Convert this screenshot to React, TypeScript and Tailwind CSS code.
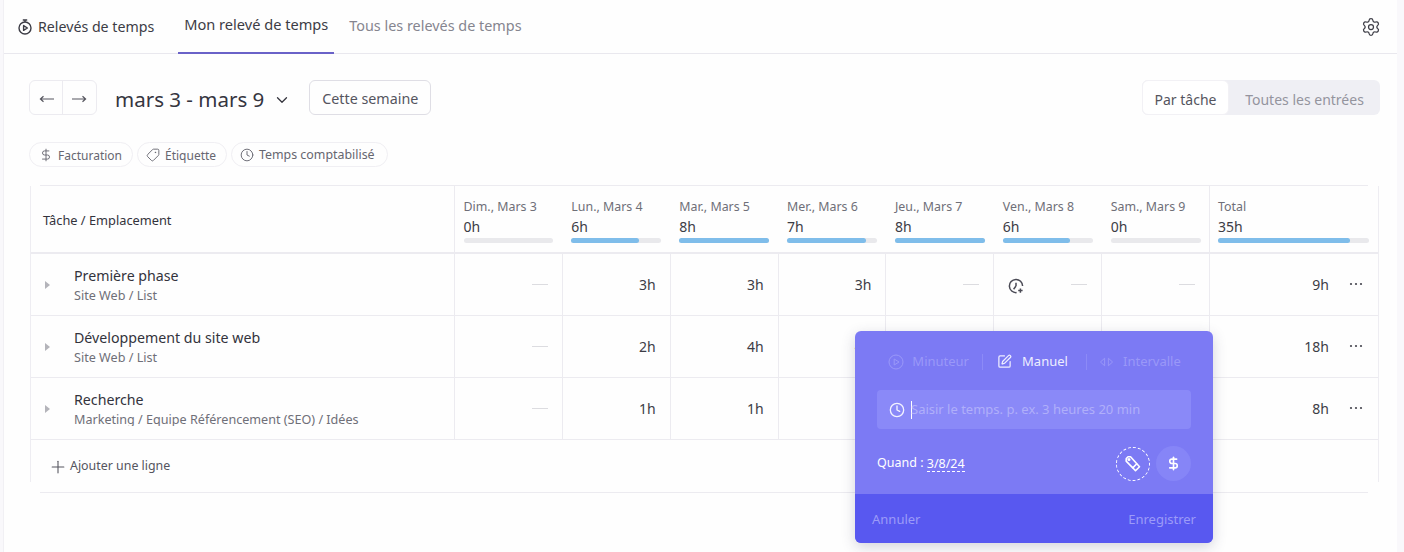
import { ChevronDown, Clock, DollarSign, Plus, Settings, SquarePen, Tag } from "lucide-react";

const days = [
  { label: "Dim., Mars 3", total: "0h", fill: "w-0" },
  { label: "Lun., Mars 4", total: "6h", fill: "w-[75%]" },
  { label: "Mar., Mars 5", total: "8h", fill: "w-full" },
  { label: "Mer., Mars 6", total: "7h", fill: "w-[88%]" },
  { label: "Jeu., Mars 7", total: "8h", fill: "w-full" },
  { label: "Ven., Mars 8", total: "6h", fill: "w-[75%]" },
  { label: "Sam., Mars 9", total: "0h", fill: "w-0" },
];

// cells hidden behind the popup stay empty
const rows = [
  { title: "Première phase", path: "Site Web / List", hours: ["", "3h", "3h", "3h", "", "", ""], total: "9h", clipped: false },
  { title: "Développement du site web", path: "Site Web / List", hours: ["", "2h", "4h", "4h", "", "", ""], total: "18h", clipped: false },
  { title: "Recherche", path: "Marketing / Equipe Référencement (SEO) / Idées", hours: ["", "1h", "1h", "", "", "", ""], total: "8h", clipped: true },
];

function TimerIcon({ className }: { className?: string }) {
  return (
    <svg viewBox="0 0 16 16" fill="none" stroke="currentColor" strokeWidth="1.4" className={className}>
      <path d="M5.8 1h4.4M8 1v2" />
      <circle cx="8" cy="9" r="6" />
      <path d="M6.6 6.6v4.8L10.4 9z" strokeLinejoin="round" />
    </svg>
  );
}

function TimerIconPlain() {
  return (
    <svg viewBox="0 0 16 16" fill="none" stroke="currentColor" strokeWidth="1" className="h-4 w-4">
      <circle cx="8" cy="8" r="7" />
      <path d="M6.2 5v6L11 8z" strokeLinejoin="round" />
    </svg>
  );
}

function ClockPlusIcon() {
  return (
    <svg viewBox="0 0 16 16" fill="none" stroke="currentColor" strokeWidth="1.5" className="h-4 w-4 text-[#4a4a55]">
      <path d="M8.6 14.6A6.6 6.6 0 1 1 14.6 8" />
      <path d="M8 8 5.6 11.2M8 4.8V8" />
      <path d="M12.4 10.4v4.4M10.2 12.6h4.4" />
    </svg>
  );
}

function Arrow({ flip }: { flip?: boolean }) {
  return (
    <svg viewBox="0 0 15 10" fill="none" stroke="currentColor" strokeWidth="1.2" className={flip ? "mt-[3px] h-[10px] w-[15px] rotate-180" : "mt-[3px] h-[10px] w-[15px]"}>
      <path d="M1 5h14M4.5 2.2 1.4 5l3.1 2.8" />
    </svg>
  );
}

function TagsIcon() {
  return (
    <svg viewBox="0 0 16 16" fill="none" stroke="currentColor" strokeWidth="1.4" strokeLinejoin="round" className="h-[18px] w-[18px]">
      <path d="M2 3.2 3.6 1.6h2.2l5.6 6.2-3.6 3.6L1.9 5.4z" />
      <path d="M11.4 7.8l2.4 2.6-3.6 3.6-2.4-2.6" />
      <circle cx="4.4" cy="4" r="0.7" />
    </svg>
  );
}

function Dots() {
  return (
    <svg viewBox="0 0 14 4" fill="currentColor" className="ml-[20px] h-1 w-[14px] -translate-y-px text-[#45454e]">
      <circle cx="2" cy="2" r="1.1" />
      <circle cx="7" cy="2" r="1.1" />
      <circle cx="12" cy="2" r="1.1" />
    </svg>
  );
}

function Filter({ icon, label, className }: { icon: React.ReactNode; label: string; className: string }) {
  return (
    <div className={`flex h-[25px] items-center gap-[5px] rounded-full border border-[#f0eff3] text-[#666670] ${className}`}>
      {icon}
      <span className="pt-[2px]">{label}</span>
    </div>
  );
}

export default function App() {
  return (
    <div className="relative h-[552px] w-[1404px] overflow-hidden bg-[#f9f8fb] font-['Noto_Sans',sans-serif] text-[#2f2f38]">
      <div className="ml-[3px] mr-[7px] h-full border-l border-[#f1f0f4] bg-[#fefefe]">
        <header className="flex h-[54px] items-stretch border-b border-[#e9e8ee] pl-[13px]">
          <div className="mt-px flex items-center gap-[5px] text-[14.2px] text-[#3c3c45]">
            <TimerIcon className="h-4 w-4" />
            <span>Relevés de temps</span>
          </div>
          <div className="ml-[24px] flex h-[54px] w-[156px] items-center justify-center border-b-2 border-[#6a62c8] pb-[2px] text-[14.6px] text-[#3c3c45]">
            Mon relevé de temps
          </div>
          <div className="ml-[15px] flex items-center pb-[2px] text-[14.4px] text-[#85858f]">Tous les relevés de temps</div>
          <div className="ml-auto flex items-center pr-4">
            <Settings className="h-5 w-5 text-[#3f3f48]" strokeWidth={1.5} />
          </div>
        </header>

        <div className="mt-[26px] flex h-[35px] items-center pl-[25px]">
          <div className="flex h-[35px] w-[68px] rounded-md border border-[#ecebf0] text-[#55555e]">
            <div className="flex w-[33px] items-center justify-center border-r border-[#ecebf0]">
              <Arrow />
            </div>
            <div className="flex flex-1 items-center justify-center">
              <Arrow flip />
            </div>
          </div>
          <div className="ml-[18px] flex items-center gap-[9px] pt-1 text-[20.5px] text-[#35353e]">
            mars 3 - mars 9
            <ChevronDown className="h-[18px] w-[18px]" strokeWidth={1.7} />
          </div>
          <div className="ml-[18px] flex h-[35px] w-[122px] items-center justify-center rounded-md border border-[#dfdee5] pt-[3px] text-[14.3px] text-[#55555e]">
            Cette semaine
          </div>
          <div className="ml-auto mr-[17px] flex h-[35px] w-[238px] rounded-md bg-[#efeff4] text-sm">
            <div className="flex w-[87px] items-center justify-center rounded-md border border-[#f2f1f5] bg-white pt-1 text-[#55555e]">
              Par tâche
            </div>
            <div className="flex flex-1 items-center justify-center pt-1 text-[#94949e]">Toutes les entrées</div>
          </div>
        </div>

        <div className="mt-[27px] flex gap-[4px] pl-[25px]">
          <Filter icon={<DollarSign className="h-[14px] w-[14px]" strokeWidth={1.6} />} label="Facturation" className="w-[104px] pl-[9px] text-xs" />
          <Filter icon={<Tag className="h-[14px] w-[14px] -scale-x-100" strokeWidth={1.6} />} label="Étiquette" className="w-[90px] pl-[8px] text-xs" />
          <Filter icon={<Clock className="h-[14px] w-[14px]" strokeWidth={1.6} />} label="Temps comptabilisé" className="w-[157px] pl-[8px] text-[12.4px]" />
        </div>

        <div className="ml-[36px] mr-[29px] mt-[18px] h-px bg-[#ecebf0]" />

        <div className="ml-[26px] mr-[18px] border-x border-[#eeedf2]">
          <div className="grid h-[68px] grid-cols-[424px_repeat(7,107.86px)_1fr] border-b-2 border-[#ecebf0]">
            <div className="flex items-center border-r border-[#ecebf0] pl-[12px] pt-1 text-[12.8px] text-[#33333c]">Tâche / Emplacement</div>
            {days.map((day) => (
              <div key={day.label} className="pl-[8.5px] pr-[9.5px] pt-[13px]">
                <div className="text-[12.4px] leading-[16px] text-[#6f6f78]">{day.label}</div>
                <div className="mt-[2px] text-sm leading-[20px] text-[#3c3c45]">{day.total}</div>
                <div className="mt-px h-[5px] rounded-full bg-[#e9e9ec]">
                  <div className={`h-full rounded-full bg-[#7fbdea] ${day.fill}`} />
                </div>
              </div>
            ))}
            <div className="-ml-px border-l border-[#ecebf0] pl-[8px] pr-[9px] pt-[13px]">
              <div className="text-[12.4px] leading-[16px] text-[#6f6f78]">Total</div>
              <div className="mt-[2px] text-sm leading-[20px] text-[#3c3c45]">35h</div>
              <div className="mt-px h-[5px] rounded-full bg-[#e9e9ec]">
                <div className="h-full w-[87.5%] rounded-full bg-[#7fbdea]" />
              </div>
            </div>
          </div>

          {rows.map((row) => (
            <div key={row.title} className="grid h-[62px] grid-cols-[424px_repeat(7,107.86px)_1fr] border-b border-[#ecebf0]">
              <div className="flex items-center border-r border-[#ecebf0] pl-[14px]">
                <div className="h-0 w-0 border-y-[4px] border-l-[5px] border-y-transparent border-l-[#b4b4ba]" />
                <div className={row.clipped ? "ml-[24px] mt-[12px] h-[36px] self-start overflow-hidden" : "ml-[24px] mt-[12px] self-start"}>
                  <div className="text-[14.2px] leading-[20px] text-[#33333c]">{row.title}</div>
                  <div className="mt-px text-[12.6px] leading-[17px] text-[#6f6f78]">{row.path}</div>
                </div>
              </div>
              {row.hours.map((value, index) => (
                <div key={index} className="relative flex items-center justify-end border-r border-[#ecebf0] pr-[14px] text-sm text-[#3c3c45]">
                  {value || <div className="h-px w-4 bg-[#dcdce0]" />}
                  {row.title === "Première phase" && index === 5 ? (
                    <div className="absolute left-[14px] top-[24px]">
                      <ClockPlusIcon />
                    </div>
                  ) : null}
                </div>
              ))}
              <div className="flex items-center justify-end pr-[15px] text-sm text-[#3c3c45]">
                <span>{row.total}</span>
                <Dots />
              </div>
            </div>
          ))}

          <div className="flex h-[42px] items-center pl-[17px] pt-[11px] text-[12.4px] text-[#55555e]">
            <Plus className="h-5 w-5" strokeWidth={1.3} />
            <span className="ml-[2px]">Ajouter une ligne</span>
          </div>
        </div>
        <div className="ml-[36px] mr-[29px] mt-[10px] h-px bg-[#ecebf0]" />
      </div>

      <div className="absolute left-[855px] top-[331px] flex h-[212px] w-[358px] flex-col overflow-hidden rounded-md bg-[#7c7af4] shadow-[0_4px_14px_rgba(60,60,90,0.22)]">
        <div className="flex h-[60px] items-center pt-[1px] text-[13px]">
          <div className="flex w-[126px] items-center justify-end gap-[8px] pr-[12px] text-[#9a98f8]">
            <TimerIconPlain />
            Minuteur
          </div>
          <div className="ml-px h-[16px] w-px bg-[#8c8af7]" />
          <div className="flex w-[103px] items-center justify-center gap-[10px] pr-1 text-[#eeeeff]">
            <SquarePen className="h-[15px] w-[15px]" strokeWidth={2} />
            Manuel
          </div>
          <div className="h-[16px] w-px bg-[#8c8af7]" />
          <div className="flex items-center gap-[9px] pl-[12px] text-[#9a98f8]">
            <svg viewBox="0 0 16 12" fill="none" stroke="currentColor" strokeWidth="1" className="h-3 w-[15px]">
              <path d="M6 2 1.5 6 6 10zM10 2l4.5 4L10 10z" />
            </svg>
            Intervalle
          </div>
        </div>

        <div className="ml-[22px] mt-[-1px] flex h-[39px] w-[314px] items-center rounded bg-[#8a89f8] pl-[12px] text-[13px] text-[#b0affa]">
          <Clock className="h-4 w-4 text-[#f2f2ff]" strokeWidth={2} />
          <div className="ml-[6px] h-[18px] w-px bg-white" />
          <span className="-ml-px">Saisir le temps. p. ex. 3 heures 20 min</span>
        </div>

        <div className="mt-[17px] flex h-[35px] items-center pl-[22px] pr-[22px] text-[12.5px] text-white">
          <span>Quand :&nbsp;</span>
          <span className="border-b border-dashed border-white leading-[15px]">3/8/24</span>
          <div className="ml-auto flex h-[34px] w-[34px] items-center justify-center rounded-full border border-dashed border-white">
            <TagsIcon />
          </div>
          <div className="ml-[6px] flex h-[35px] w-[35px] items-center justify-center rounded-full bg-[#8685f7]">
            <DollarSign className="h-[15px] w-[15px]" strokeWidth={2.6} />
          </div>
        </div>

        <div className="mt-auto flex h-[49px] items-center justify-between bg-[#5858f0] px-[17px] pt-[2px] text-[13px] text-[#9c9bf8]">
          <span>Annuler</span>
          <span>Enregistrer</span>
        </div>
      </div>
    </div>
  );
}
